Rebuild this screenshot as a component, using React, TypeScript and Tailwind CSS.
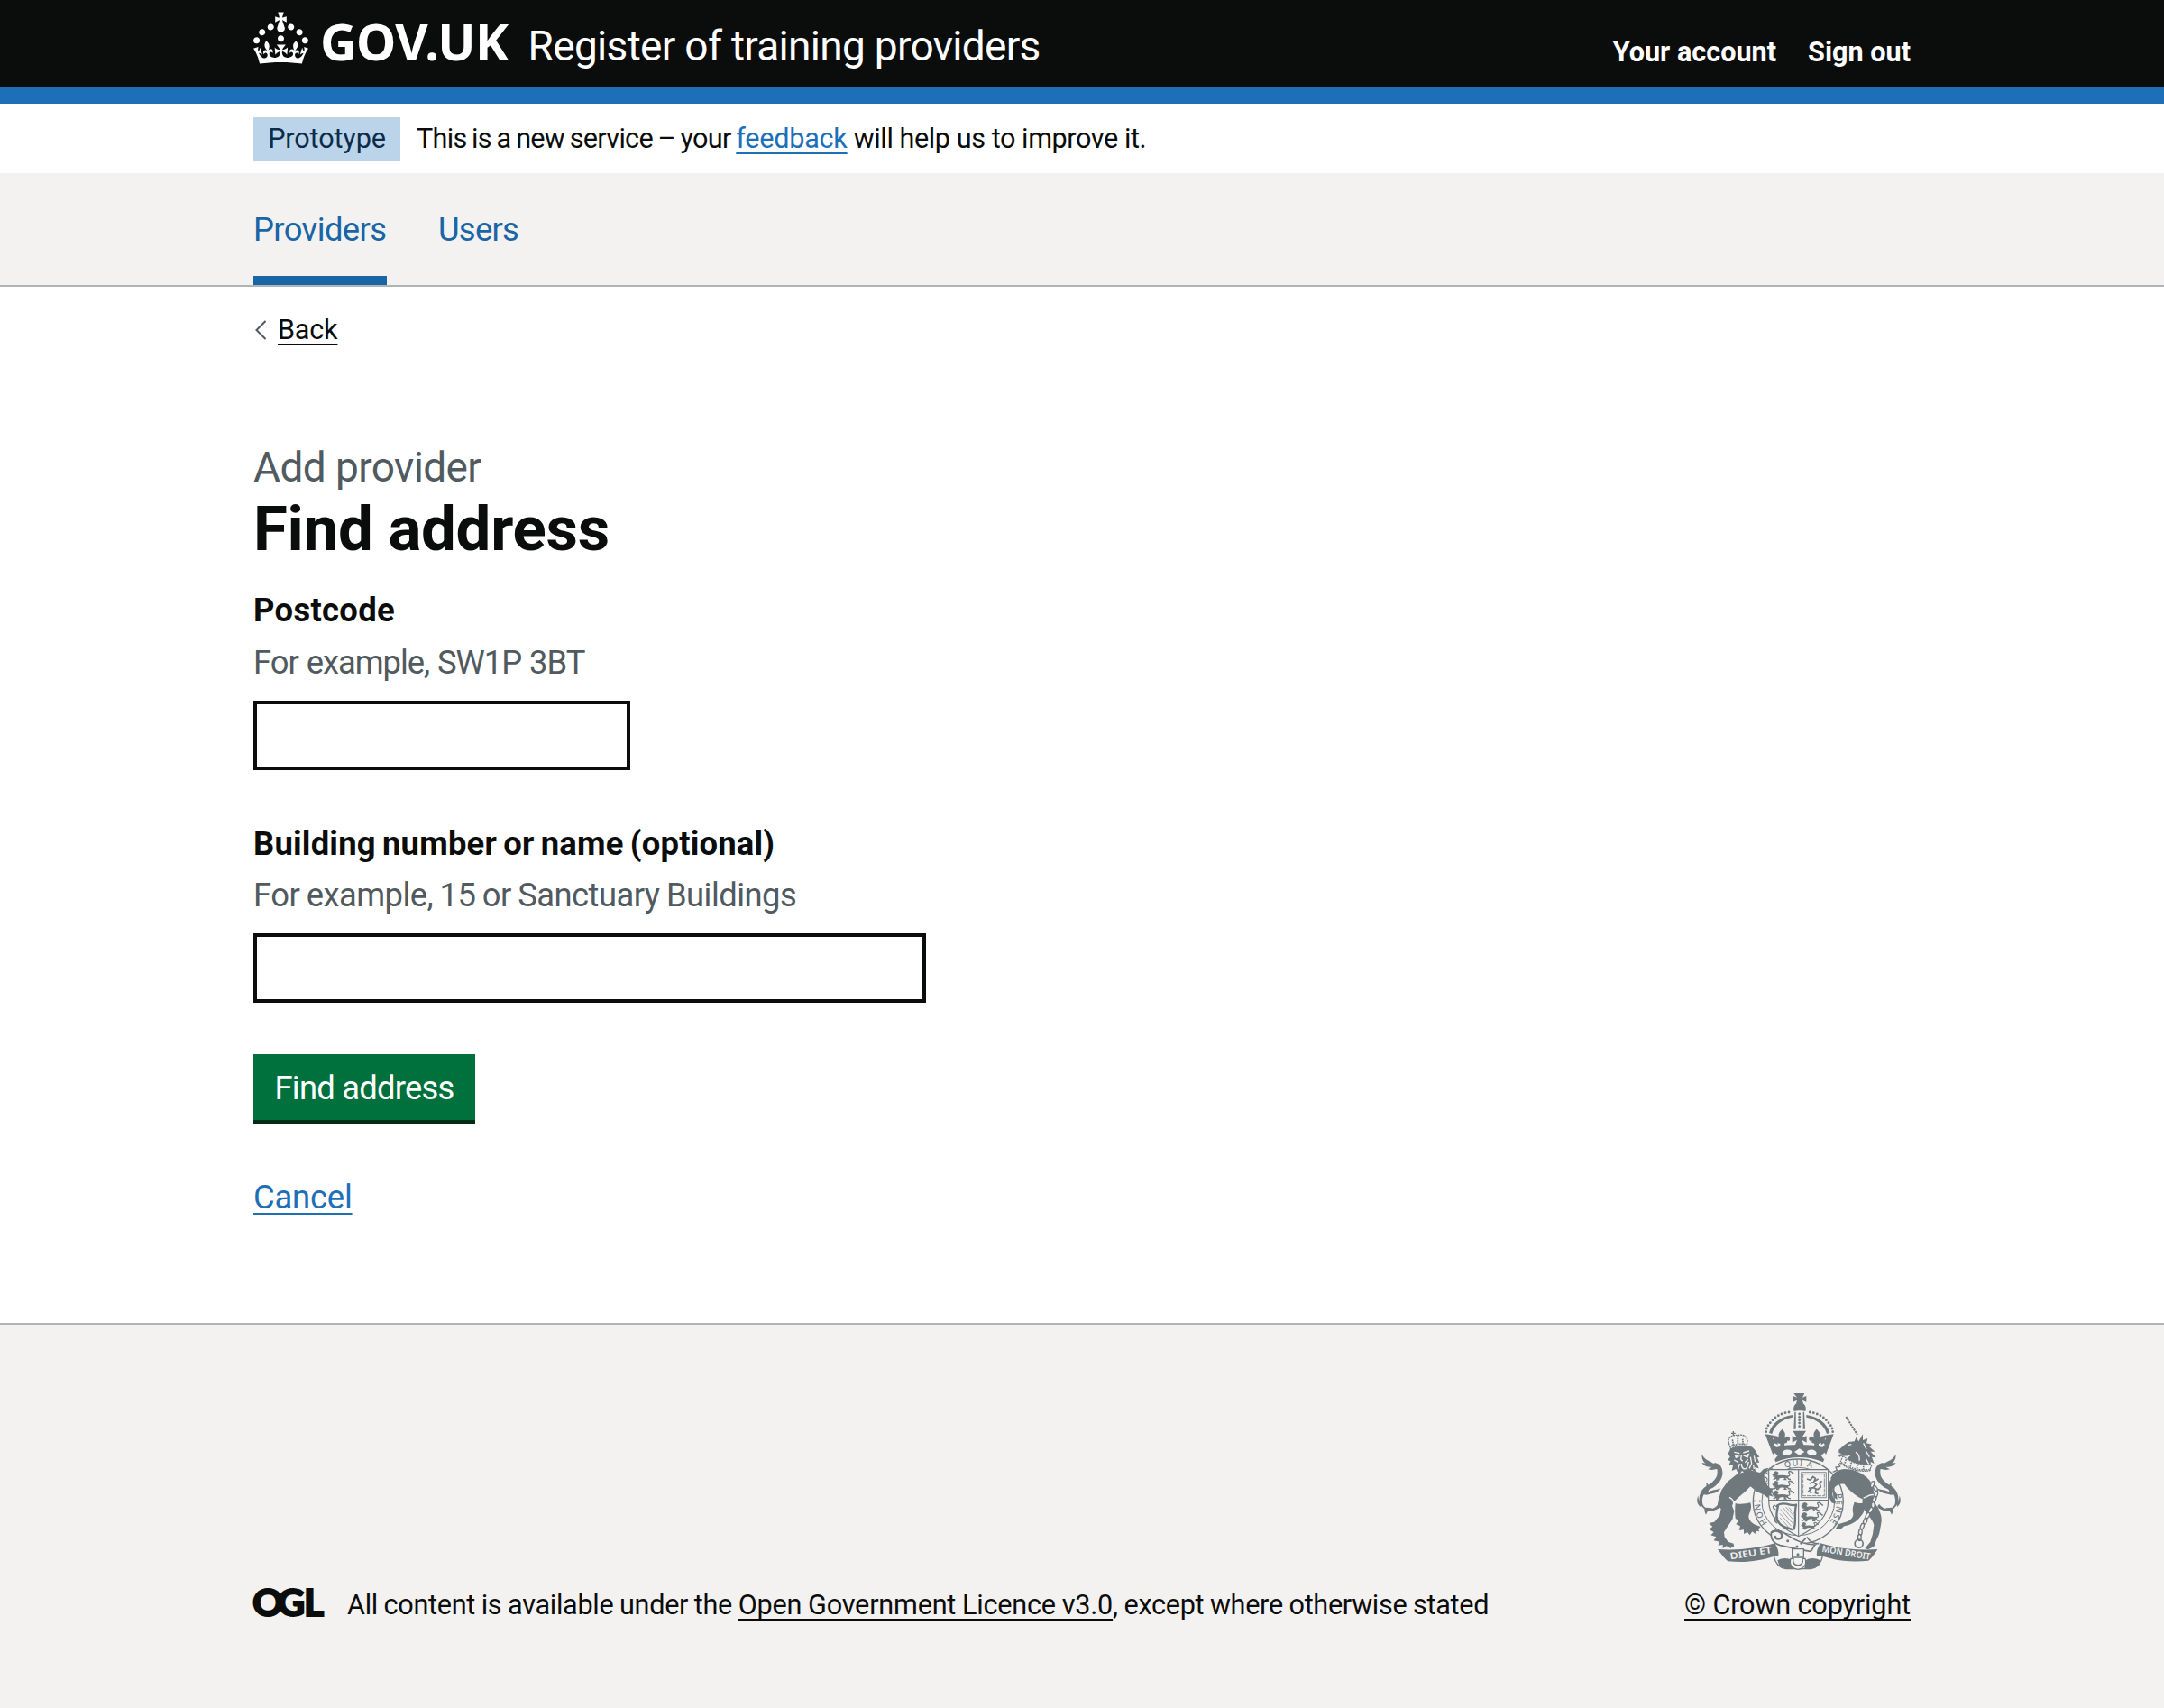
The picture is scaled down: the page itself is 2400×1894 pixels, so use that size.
import type { ReactNode } from "react";

const INK = "#6f797d";
const PAPER = "#f3f2f1";

function Container({ children, className = "" }: { children: ReactNode; className?: string }) {
  return <div className={`mx-auto w-[1838px] ${className}`}>{children}</div>;
}

function Crown() {
  return (
    <svg viewBox="0 0 32 30" className="mt-[13px] h-[58px] w-[61px] shrink-0" fill="currentColor" aria-hidden="true">
      <path d="M22.6 10.4c-1 .4-2-.1-2.4-1-.4-.9.1-2 1-2.4.9-.4 2 .1 2.4 1s-.1 2-1 2.4m-5.9 6.7c-.9.4-2-.1-2.4-1-.4-.9.1-2 1-2.4.9-.4 2 .1 2.4 1s-.1 2-1 2.4m10.8-3.7c-1 .4-2-.1-2.4-1-.4-.9.1-2 1-2.4.9-.4 2 .1 2.4 1s0 2-1 2.4m3.3 4.8c-1 .4-2-.1-2.4-1-.4-.9.1-2 1-2.4.9-.4 2 .1 2.4 1s-.1 2-1 2.4M17 4.7l2.3 1.2V2.5l-2.3.7-.2-.2.9-3h-3.4l.9 3-.2.2c-.1.1-2.3-.7-2.3-.7v3.4L15 4.7c.1.1.1.2.2.2l-1.3 4c-.1.2-.1.4-.1.6 0 1.1.8 2 1.9 2.2h.7c1-.2 1.9-1.1 1.9-2.1 0-.2 0-.4-.1-.6l-1.3-4c-.1-.2 0-.2.1-.3m-7.6 5.7c.9.4 2-.1 2.4-1 .4-.9-.1-2-1-2.4-.9-.4-2 .1-2.4 1s0 2 1 2.4m-5 3c.9.4 2-.1 2.4-1 .4-.9-.1-2-1-2.4-.9-.4-2 .1-2.4 1s.1 2 1 2.4m-3.2 4.8c.9.4 2-.1 2.4-1 .4-.9-.1-2-1-2.4-.9-.4-2 .1-2.4 1s0 2 1 2.4m14.8 11c4.4 0 8.6.3 12.3.8 1.1-4.5 2.4-7 3.7-8.8l-2.5-.9c.2 1.3.3 1.9 0 2.7-.4-.4-.8-1.1-1.1-2.3l-1.2 4c.7-.5 1.3-.8 2-.9-1.1 2.5-2.6 3.1-3.5 3-1.1-.2-1.7-1.2-1.5-2.1.3-1.2 1.5-1.5 2.1-.1 1.1-2.3-.8-3-2-2.3 1.9-1.9 2.1-3.5.6-5.6-2.1 1.6-2.1 3.2-1.2 5.5-1.2-1.4-3.2-.6-2.5 1.6.9-1.4 2.1-.5 1.9.8-.2 1.1-1.7 2.1-3.5 1.9-2.7-.2-2.9-2.1-2.9-3.6.7-.1 1.9.5 2.9 1.9l.4-4.3c-1.1 1.1-2.1 1.4-3.2 1.4.4-1.2 2.1-3 2.1-3h-5.4s1.7 1.9 2.1 3c-1.1 0-2.1-.2-3.2-1.4l.4 4.3c1-1.4 2.2-2 2.9-1.9-.1 1.5-.2 3.4-2.9 3.6-1.9.2-3.4-.8-3.5-1.9-.2-1.3 1-2.2 1.9-.8.7-2.3-1.2-3-2.5-1.6.9-2.2.9-3.9-1.2-5.5-1.5 2-1.3 3.7.6 5.6-1.2-.7-3.1 0-2 2.3.6-1.4 1.8-1.1 2.1.1.2.9-.3 1.9-1.5 2.1-.9.2-2.4-.5-3.5-3 .6 0 1.2.3 2 .9l-1.2-4c-.3 1.1-.7 1.9-1.1 2.3-.3-.8-.2-1.4 0-2.7l-2.9.9C1.3 23 2.6 25.5 3.7 30c3.7-.5 7.9-.8 12.3-.8" />
    </svg>
  );
}

/* A walking lion, used six times on the shield. */
function ShieldLion({ x, y }: { x: number; y: number }) {
  return (
    <g transform={`translate(${x} ${y})`}>
      <path d="M4 2l7-3 7 3 2 5-4 4 3 2 11-1 12 1 8 2 2 5-6 3-12-2-12 2-8 4-6-4-2-7-6-2-2-4 5-1z" />
      <path d="M8 14l-6 4M14 20l-8 6h-4M22 22l-4 6h-6M38 20l6 7h-7M48 20l6 6 6 0M48 15c10 4 10-6 6-10s4-8 10-2 4 6 8 4" fill="none" stroke={INK} strokeWidth="4" />
    </g>
  );
}

function HalfCrown() {
  const beads = [
    [266, 158], [268, 147], [273, 137], [280, 128], [288, 119], [297, 111], [307, 104], [318, 99], [330, 95], [342, 93],
  ];
  return (
    <>
      {beads.map(([cx, cy]) => (
        <circle key={cx} cx={cx} cy={cy} r="4.2" />
      ))}
      <path d="M276 162c8-30 36-54 78-60v8c-34 6-60 26-68 55z" />
      <path d="M361 92h4v57h-7z" />
      {/* Circlet */}
      <path d="M263 166l34 5-9 11 7 5 8-5 2 20-10-6-2 8 8 6-2 0c24-7 50-9 79-9v42c-28 0-54 5-80 16z" />
      <ellipse cx="336" cy="227" rx="16" ry="9.5" fill={PAPER} transform="rotate(-8 336 227)" />
      <path d="M293 227l12 10-10 13-9-11z" fill={PAPER} />
      {/* Fleur-de-lis */}
      <path d="M320 149c10 10 12 18 7 30 6-8 14-8 18 0 2 8-4 12-9 8 2 8-4 10-9 10l2 14h-16l0-14c-6 2-14-4-12-10-8 4-12-4-9-12 6-6 14-2 18 6-5-12-2-22 10-32z" />
      {/* Half of the centre cross */}
      <path d="M355 155h23v52h-17l8-22-16 9v-22l16 6z" />
    </>
  );
}

function TailPair() {
  return (
    <>
      <path d="M108 398c-18 24-46 20-53 0-5-22 6-42 26-50 26-12 46-38 39-64-3-14-14-22-26-22l-8 8c12-2 18 8 18 20 2 22-18 38-36 48-24 14-32 48-16 68 14 20 48 18 62 2z" />
      <path d="M92 264c-10-8-28-10-40-31 0 16 6 26 14 30l-14-2c8 12 22 16 34 14l-14 8 14 2 20-4z" />
      <path d="M56 366c4-14 16-22 10-40 14 10 12 24 6 34 12-8 30-8 44-14-12 16-26 18-48 22z" />
      <path d="M50 394c-6-6-10-12-10-24-6 16-4 30 8 38zM62 410c-2 10 0 16 4 24 4-12 12-18 22-22z" />
    </>
  );
}

function RoyalArms() {
  const chain = [
    [620, 333, 20], [630, 347, -30], [632, 365, 10], [626, 383, 20], [622, 402, 0], [614, 419, 30], [604, 437, 30],
    [596, 455, 20], [586, 473, 20], [580, 492, 5], [577, 510, 0],
  ];
  return (
    <svg viewBox="0 15 750 615" className="-mr-px h-[205px] w-[250px]" fill={INK} aria-hidden="true">
      <defs>
        <path id="motto-ring" d="M292 482A127 119 0 1 1 452 484" />
      </defs>

      {/* Supporters' tails */}
      <TailPair />
      <g transform="translate(750 0) scale(-1 1)">
        <TailPair />
      </g>

      {/* Garter */}
      <ellipse cx="373" cy="390" rx="150" ry="141" fill={PAPER} stroke={INK} strokeWidth="4" />
      <ellipse cx="373" cy="390" rx="121" ry="113" fill="none" stroke={INK} strokeWidth="3" />
      <g fontFamily="Noto Sans, sans-serif" fontSize="28" fontWeight="500" letterSpacing="3" textAnchor="middle">
        <text>
          <textPath href="#motto-ring" startOffset="12%">HONI</textPath>
        </text>
        <text>
          <textPath href="#motto-ring" startOffset="31%">SOIT</textPath>
        </text>
        <text>
          <textPath href="#motto-ring" startOffset="50%">QUI A</textPath>
        </text>
        <text>
          <textPath href="#motto-ring" startOffset="86%">PENSE</textPath>
        </text>
      </g>

      {/* Shield */}
      <path d="M275 284h198v104c0 54-44 92-99 118-55-26-99-64-99-118z" fill={PAPER} stroke={INK} strokeWidth="3.5" />
      <path d="M374 284v220M275 386h198" stroke={INK} strokeWidth="3.5" />
      <ShieldLion x={288} y={290} />
      <ShieldLion x={288} y={322} />
      <ShieldLion x={288} y={354} />
      <ShieldLion x={384} y={394} />
      <ShieldLion x={383} y={427} />
      <g transform="translate(76 92) scale(.8)">
        <ShieldLion x={384} y={460} />
      </g>
      <g fill="none" stroke={INK}>
        <path d="M383 293h83v84h-83z" strokeWidth="2.5" />
        <path d="M389 299h71v72h-71z" strokeWidth="2.5" strokeDasharray="14 3" />
        <path d="M402 315l12 4 8-12 8 6-4 10 14-8M410 330l14-4 10 8-10 10-16 2M424 344l14 6 10-8-4-14 8-6M418 346l-10 10 10 6M432 350l-2 12 10 2" strokeWidth="5" />
        <path d="M299 408c8-10 20-12 34-10 12 2 22 8 36 2M306 404c-4 20-10 40 4 58 12 16 28 14 44 22M366 402c-8 30 2 54-8 82" strokeWidth="7" />
        <path d="M314 416l40 46M322 410l34 40M332 408l26 30M342 410l18 20M312 430l38 42M312 444l30 32" strokeWidth="2" />
        <path d="M296 402c-10 4-6 14 2 14M300 440c-8 6-6 18 4 22" strokeWidth="5" />
      </g>

      {/* Imperial crown */}
      <path d="M358 30h36l-7 14 13-5v20l-13-6 3 12c8 4 10 16 7 25-8-3-30-3-38 0-3-9-1-21 7-25l3-12-13 6V39l13 5z" />
      <HalfCrown />
      <g transform="translate(754 0) scale(-1 1)">
        <HalfCrown />
      </g>
      {[99, 109, 119, 129, 140].map((cy) => (
        <circle key={cy} cx="377" cy={cy} r="4.2" />
      ))}
      <path d="M377 214l17 11-17 11-17-11z" fill={PAPER} />

      {/* Lion */}
      <path d="M168 300L212 286 246 294 258 282 274 278 260 300 260 314 268 334 280 346 292 346 286 354 292 362 282 362 290 374 276 370 272 378 260 368 236 358 214 340 196 358 172 378 158 392 153 404 160 422 154 450 136 476 126 492 128 508 140 524 158 530 160 542 148 540 150 547 134 538 122 546 122 534 106 536 112 524 92 520 100 508 82 502 92 492 76 482 88 474 76 462 94 458 112 436 116 414 104 404 108 382 118 352 138 324z" />
      <path d="M164 396c18 6 36 0 50-2 6 20-2 30-6 44 0 14 10 24 24 30l16 6-8 8 4 8-12-2-2 10-10-8-8 12-8-10-12 6v-14l-16 2 4-14-14-6 8-12-10-8c-2-18-2-32 0-50z" />
      <path d="M144 376c12 6 16 14 14 26" fill="none" stroke={PAPER} strokeWidth="4" />
      <path d="M148 214c20-8 40-12 66-8 10 4 18 14 20 22l10 14-8 2 8 16-10 0 8 20-14-4 4 18-14-10-4 16-10-14-4 12-14-10-10 14-10-20-14 6 4-18-14 0 6-14-10-4 8-10-6-12z" />
      <path d="M160 226l18 4M190 228l20-6M164 238l10 2-8 4zM194 238l14-5-4 10zM184 236l-2 14 6 6M160 252l14 8M206 250l-10 10M178 264l-6 20M184 264c0 16 10 22 18 14l6-20M214 242l4 22-8 16M226 238l4 20M224 268l2 14" fill="none" stroke={PAPER} strokeWidth="4" />
      <path d="M142 196l6 18c20-8 34-10 54-8l2-20c-4-16-20-20-32-16-20-4-36 10-30 26z" fill={PAPER} stroke={INK} strokeWidth="4" strokeDasharray="6 2" />
      <path d="M172 172v30M154 184l4 20M188 182l2 18M144 208c18-8 34-10 56-8" fill="none" stroke={INK} strokeWidth="5" strokeDasharray="5 2" />
      <path d="M157 156v14M150 163h14" stroke={INK} strokeWidth="4" />

      {/* Unicorn */}
      <path d="M481 312c8-18 24-28 44-30 30 0 56 10 76 28 18 16 26 36 22 64 0 16 10 28 16 38 8 16 14 34 10 50-4 22-4 36-16 56l-8 22-20 10-10-4 18-22 8-26 4-30c-6-24-26-36-36-58-4-12-2-20-2-28-18-8-44-26-60-50-14-2-26 4-32 10-4 10 0 16 6 24l2 18-12-8z" />
      <path d="M560 392c18 6 30 4 36 4-4 22-2 30-16 44-14 18-32 28-54 32l-12 10-16-2 8-14 32-10c14-8 18-14 18-26-4-16 0-26 4-38z" />
      <path d="M480 318c-8 16-8 34-6 54l10 22 12 4 2-8-10-18c-4-18 0-34 8-46z" />
      <path d="M590 378c14-2 18-14 34-10" fill="none" stroke={PAPER} strokeWidth="4" />
      <path d="M508 218l16-14 16-12 20-2 6-14 8 14 14-24 0 20 16-6-4 16 18 4-8 8 18 16-14 0 18 20-14-2 8 22-12-6 0 30c-22-4-52-10-84-30 4-8 10-16 18-22-12 2-22 4-26 2l-12 4-4-8 12-2-10-4z" />
      <path d="M540 202l10-2M564 226c10 6 14 16 12 28M590 196l10 20M598 222l12 20M598 248l10 18" fill="none" stroke={PAPER} strokeWidth="4" />
      <path d="M522 238c26 24 60 32 96 30l-8 20c-34 4-70-4-98-26z" fill={PAPER} stroke={INK} strokeWidth="3.5" strokeDasharray="6 2" />
      <path d="M516 260c28 20 58 28 94 24M532 250l-4 14M550 260l-4 14M570 268l-2 14M590 272l0 12" fill="none" stroke={INK} strokeWidth="5" strokeDasharray="5 3" />
      <path d="M532 108l38 60" stroke={INK} strokeWidth="6" strokeDasharray="7 2.5" />
      <path d="M508 264l4 10-14 2 4 10-14 6" fill="none" stroke={INK} strokeWidth="4" />

      {/* Chain */}
      {chain.map(([cx, cy, r]) => (
        <ellipse key={cy} cx={cx} cy={cy} rx="5.5" ry="10.5" fill={PAPER} stroke={INK} strokeWidth="4" transform={`rotate(${r} ${cx} ${cy})`} />
      ))}
      <circle cx="575" cy="530" r="13.5" fill="none" stroke={INK} strokeWidth="5" />

      {/* Scroll */}
      <path d="M105 549c68 4 130-2 190-20 10 16 14 28 12 44l-16 0c-44 14-90 22-152 16-12-10-20-22-34-40z" />
      <path d="M637 549c-68 4-130-2-190-20-10 16-14 28-12 44l14-2c50 16 98 22 158 16 12-10 20-22 30-38z" />
      <g fill={PAPER} fontFamily="Noto Sans, sans-serif" fontWeight="600" fontSize="30">
        <text transform="translate(148 583) rotate(-9)" textLength="140" lengthAdjust="spacingAndGlyphs">DIEU ET</text>
        <text transform="translate(451 557) rotate(9.5)" textLength="162" lengthAdjust="spacingAndGlyphs">MON DROIT</text>
      </g>
      <path d="M292 572c4 22 14 38 40 42h82c26-4 36-20 40-42" fill="none" stroke={INK} strokeWidth="4" />
      <path d="M304 586c18-10 36-8 48 0l2 26c-20 4-36 0-44-8zM446 586c-18-10-36-8-48 0l-4 26c22 4 38 0 46-8z" />

      {/* Belt and buckle */}
      <path d="M283 494c-2 22 8 36 30 42l66 14 34 6c10-4 8-16 16-22-28 0-62-12-92-32-18-16-44-22-54-8z" fill={PAPER} stroke={INK} strokeWidth="5" />
      <path d="M283 494c14-12 36-4 36 10s-22 14-24 0" fill="none" stroke={INK} strokeWidth="7" />
      <path d="M353 548h38v28h-38z" fill={PAPER} stroke={INK} strokeWidth="4" />
      <path d="M348 580c-8 24 10 34 24 36 16-2 32-12 24-36h-9c4 14-4 22-15 22s-19-8-15-22z" fill={PAPER} stroke={INK} strokeWidth="4" />
      <circle cx="338" cy="521" r="4.5" />
      <circle cx="369" cy="540" r="4.5" />
      <circle cx="372" cy="566" r="4.5" />
      <path d="M398 512l-18 20M402 508c10 16 24 24 40 22" fill="none" stroke={INK} strokeWidth="5" />
    </svg>
  );
}

function OglLogo() {
  return (
    <svg viewBox="0 0 79 32" className="mt-[-1px] h-[32px] w-[79px] shrink-0 overflow-visible" fill="#0b0c0c" aria-label="OGL">
      <text x="-1 26.5 56" y="31.5" fontFamily="Lato, sans-serif" fontWeight="900" fontSize="42.5" stroke="#0b0c0c" strokeWidth="1.8">
        OGL
      </text>
    </svg>
  );
}

const linkLine = "underline decoration-2 underline-offset-[5px] [text-decoration-skip-ink:none]";

type FieldProps = { label: string; hint: string; labelClass: string; hintClass: string; inputClass: string };

function Field({ label, hint, labelClass, hintClass, inputClass }: FieldProps) {
  return (
    <label className="flex flex-col">
      <span className={`text-[36.4px] leading-[48px] font-bold ${labelClass}`}>{label}</span>
      <span className={`text-[36.4px] leading-[48px] text-[#505a5f] ${hintClass}`}>{hint}</span>
      <input className={`h-[77px] rounded-none border-4 border-[#0b0c0c] bg-white outline-none ${inputClass}`} />
    </label>
  );
}

export default function App() {
  return (
    <div className="flex h-[1894px] w-[2400px] flex-col overflow-hidden bg-white font-['Roboto',sans-serif] text-[#0b0c0c]">
      <header className="h-[115px] border-b-[19px] border-[#1d70b8] bg-[#0b0c0c] text-white">
        <Container className="flex h-[96px] items-start whitespace-nowrap">
          <Crown />
          <span className="ml-[13px] font-['Noto_Sans',sans-serif] text-[56px] leading-[91px] font-bold tracking-[-0.57px]">GOV.UK</span>
          <span className="ml-[22px] text-[46px] leading-[103px] tracking-[-0.69px]">Register of training providers</span>
          <nav className="ml-auto flex gap-[35px] text-[30.6px] leading-[115px] font-bold">
            <a>Your account</a>
            <a>Sign out</a>
          </nav>
        </Container>
      </header>

      <Container className="flex h-[77px] items-center text-[30.6px] leading-[48px] whitespace-nowrap">
        <strong className="mt-px flex h-12 w-[163px] items-center justify-center bg-[#bbd4ea] font-normal tracking-[-0.14px] text-[#0c2d4a]">Prototype</strong>
        <span className="ml-[18px] tracking-[-0.72px] [word-spacing:-1.2px]">
          This is a new service – your <a className={`tracking-[-0.25px] text-[#1d70b8] ${linkLine}`}>feedback</a>
          <span className="tracking-[-0.4px] [word-spacing:-0.1px]"> will help us to improve it.</span>
        </span>
      </Container>

      <nav className="h-[126px] border-b-2 border-[#b1b4b6] bg-[#f3f2f1]">
        <Container className="flex h-[124px] gap-[57px] text-[36.4px] leading-[125px] text-[#1a65a6]">
          <a className="h-[124px] w-[148px] border-b-10 border-[#1a65a6] tracking-[-0.6px]">Providers</a>
          <a className="tracking-[-0.75px]">Users</a>
        </Container>
      </nav>

      <Container className="flex grow flex-col items-start">
        <a className="mt-[29px] flex h-[38px] items-center gap-[13px] pl-[2px] text-[30.6px] leading-[38px]">
          <svg viewBox="0 0 12 22" className="h-[22px] w-[12px]" fill="none" stroke="#505a5f" strokeWidth="2" aria-hidden="true">
            <path d="M11.5 1L1.5 11l10 10" />
          </svg>
          <span className={`tracking-[-0.2px] ${linkLine}`}>Back</span>
        </a>
        <h1 className="mt-[104px] flex flex-col">
          <span className="text-[46px] leading-[58px] tracking-[-0.6px] text-[#505a5f]">Add provider</span>
          <span className="mt-[2px] text-[69px] leading-[76px] font-bold tracking-[-0.28px]">Find address</span>
        </h1>
        <div className="mt-[28px]">
          <Field
            label="Postcode"
            hint="For example, SW1P 3BT"
            labelClass="tracking-[0.32px]"
            hintClass="mt-[10px] tracking-[-1.05px] [word-spacing:1px]"
            inputClass="mt-[18px] w-[418px]"
          />
        </div>
        <div className="mt-[58px]">
          <Field
            label="Building number or name (optional)"
            hint="For example, 15 or Sanctuary Buildings"
            labelClass="tracking-[0.2px] [word-spacing:-2px]"
            hintClass="mt-[9px] tracking-[-0.55px] [word-spacing:-1px]"
            inputClass="mt-[18px] w-[746px]"
          />
        </div>
        <button className="mt-[57px] h-[77px] w-[246px] border-b-4 border-[#002d18] bg-[#00703c] text-[36.4px] leading-[75px] tracking-[-0.77px] text-white">
          Find address
        </button>
        <a className={`mt-[58px] text-[36.4px] leading-[48px] tracking-[-0.2px] text-[#1d70b8] ${linkLine}`}>Cancel</a>
      </Container>

      <footer className="h-[427px] border-t-2 border-[#b1b4b6] bg-[#f3f2f1]">
        <Container className="flex h-[330px] items-end justify-between text-[30.6px] leading-[38px] whitespace-nowrap">
          <div className="flex items-start gap-[25px]">
            <OglLogo />
            <span className="tracking-[-0.3px] [word-spacing:-0.6px]">
              All content is available under the <a className={`tracking-[-0.2px] ${linkLine}`}>Open Government Licence v3.0</a>, except where otherwise stated
            </span>
          </div>
          <div className="flex flex-col items-end">
            <RoyalArms />
            <a className={`mt-[16px] tracking-[-0.14px] ${linkLine}`}>© Crown copyright</a>
          </div>
        </Container>
      </footer>
    </div>
  );
}
